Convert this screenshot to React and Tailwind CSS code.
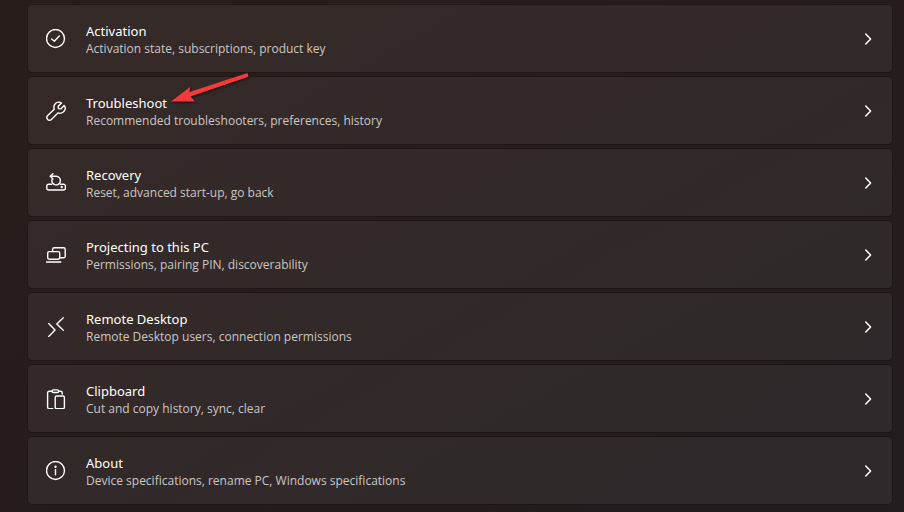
const ActivationIcon = () => (
  <>
    <circle cx="9.5" cy="9.5" r="9" />
    <path d="M5.7 10 8.3 12.3 13.3 7.1" />
  </>
);

const WrenchIcon = () => (
  <path d="M18.1 4.6 14.8 7.9 12.5 7.6 12.2 5.3 15.5 2C13.1 .7 10 1.3 8.6 3.6 7.7 5.1 7.7 6.7 8.3 8.2L1.7 14.6C.6 15.7 .6 17.3 1.6 18.4 2.7 19.5 4.4 19.4 5.4 18.4L11.9 11.9C14.3 12.8 17.2 11.8 18.5 9.6 19.5 8 19.5 6.1 18.1 4.6Z" />
);

const RecoveryIcon = () => (
  <>
    <path d="M5.8 11.2H2.6A1.8 1.8 0 0 0 .8 13V15.2A1.8 1.8 0 0 0 2.6 17H17.6A1.8 1.8 0 0 0 19.4 15.2V13A1.8 1.8 0 0 0 17.6 11.2H14.4" />
    <path d="M4.2 3.3H10.1A4.3 4.3 0 1 1 5.9 6.9M6.9 .7 4.2 3.3 6.9 5.9" />
    <circle cx="15.7" cy="14" r=".5" fill="currentColor" />
  </>
);

const ProjectingIcon = () => (
  <>
    <path d="M6.6 6.2V4.4A1.6 1.6 0 0 1 8.2 2.8H17.6A1.6 1.6 0 0 1 19.2 4.4V11.2A1.6 1.6 0 0 1 17.6 12.8H14" />
    <rect x="1.7" y="6.6" width="12" height="7.6" rx="1.4" />
    <path d="M.6 17H14.8" />
  </>
);

const RemoteIcon = () => (
  <path d="M2.7 6.6 9 13 2.7 19.5M17.3 .8 10.8 7 17.3 13.2" />
);

const ClipboardIcon = () => (
  <>
    <path d="M6 2.2H3.2A1.6 1.6 0 0 0 1.6 3.8V18A1.6 1.6 0 0 0 3.2 19.6H6.8M12.6 2.2H14.6A1.6 1.6 0 0 1 16.2 3.8V5" />
    <rect x="6" y=".9" width="6.6" height="2.6" rx="1.3" />
    <rect x="9.2" y="7" width="9.2" height="12.6" rx="1.4" />
  </>
);

const AboutIcon = () => (
  <>
    <circle cx="9.5" cy="9.5" r="9" />
    <path d="M9.5 8.5V13.7" />
    <circle cx="9.5" cy="5.8" r=".5" fill="currentColor" />
  </>
);

const settings = [
  { title: "Activation", text: "Activation state, subscriptions, product key", Icon: ActivationIcon },
  { title: "Troubleshoot", text: "Recommended troubleshooters, preferences, history", Icon: WrenchIcon, marked: true },
  { title: "Recovery", text: "Reset, advanced start-up, go back", Icon: RecoveryIcon },
  { title: "Projecting to this PC", text: "Permissions, pairing PIN, discoverability", Icon: ProjectingIcon },
  { title: "Remote Desktop", text: "Remote Desktop users, connection permissions", Icon: RemoteIcon },
  { title: "Clipboard", text: "Cut and copy history, sync, clear", Icon: ClipboardIcon },
  { title: "About", text: "Device specifications, rename PC, Windows specifications", Icon: AboutIcon },
];

// Red pointer that sits over the end of a title
const Arrow = () => (
  <svg
    viewBox="0 0 80 32"
    className="absolute left-full -top-5.5 ml-1 h-8 w-20 drop-shadow-[1px_1px_1px_rgba(0,0,0,0.6)]"
    aria-hidden="true"
  >
    <path d="M0 29.5 19 15 18.5 20 76.5 1 77.5 4.8 19.5 24.4 24 29.5Z" fill="#f43a3a" />
  </svg>
);

const SettingRow = ({ title, text, Icon, marked }) => (
  <li>
    <a
      href={"#" + title.toLowerCase().replaceAll(" ", "-")}
      className="flex items-center rounded bg-white/6 px-[18px] py-3.5 ring-1 ring-black/15 hover:bg-white/10"
    >
      <svg
        viewBox="0 0 20 20"
        className="h-5 w-5 shrink-0 text-white"
        fill="none"
        stroke="currentColor"
        strokeWidth="1.4"
        strokeLinecap="round"
        strokeLinejoin="round"
        aria-hidden="true"
      >
        <Icon />
      </svg>
      <span className="ml-5 flex min-w-0 flex-1 flex-col items-start pt-[3px]">
        <span className="relative font-['Noto_Sans','Open_Sans',sans-serif] text-[13px] leading-[18px] text-white">
          {title}
          {marked && <Arrow />}
        </span>
        <span className="text-[12px] leading-[18px] text-[#cbc7c6]">{text}</span>
      </span>
      <svg
        viewBox="0 0 12 12"
        className="h-3 w-3 shrink-0 text-white"
        fill="none"
        stroke="currentColor"
        strokeWidth="1.5"
        strokeLinecap="round"
        strokeLinejoin="round"
        aria-hidden="true"
      >
        <path d="M3.8 1 8.6 6 3.8 11" />
      </svg>
    </a>
  </li>
);

const App = () => {
  return (
    <main className="min-h-screen bg-linear-to-br from-[#291d1a] via-[#261c1c] to-[#221c1f] pt-[5px] pr-3 pb-2 pl-7 font-['Open_Sans','Noto_Sans',sans-serif]">
      <ul className="flex flex-col gap-[5px]">
        {settings.map((item) => (
          <SettingRow key={item.title} {...item} />
        ))}
      </ul>
    </main>
  );
};

export default App;
